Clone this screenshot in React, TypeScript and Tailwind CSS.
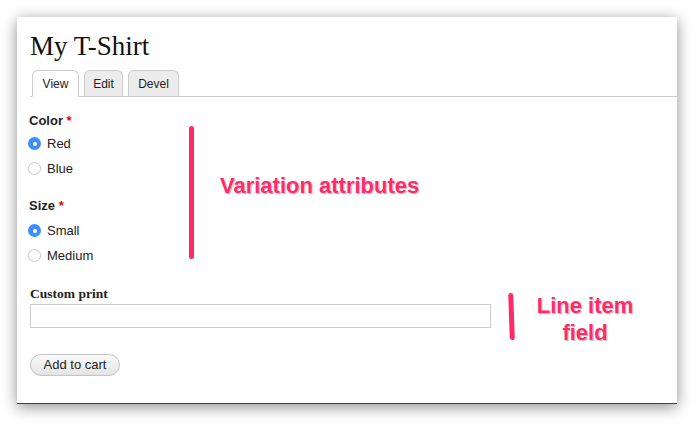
import React from 'react';

const sans = { fontFamily: '"Liberation Sans", Arial, sans-serif' };
const serif = { fontFamily: '"Liberation Serif", "Times New Roman", serif' };

const Radio: React.FC<{ checked?: boolean; label: string }> = ({ checked, label }) => (
  <div className="flex items-center h-[25px] -ml-px">
    {checked ? (
      <span className="w-[13px] h-[13px] rounded-full bg-[#3b8ff7] flex items-center justify-center">
        <span className="w-[4px] h-[4px] rounded-full bg-white" />
      </span>
    ) : (
      <span className="w-[13px] h-[13px] rounded-full border border-[#c8c8c8] bg-white" />
    )}
    <span className="ml-[6px] text-[13px] text-[#222]">{label}</span>
  </div>
);

const Note: React.FC<{ children: React.ReactNode }> = ({ children }) => (
  <span
    className="font-bold text-[#ff2a68] [text-shadow:0_0_2px_#fff,1px_1px_1px_rgba(0,0,0,0.35)]"
    style={{ fontFamily: '"Liberation Sans", Arial, sans-serif' }}
  >
    {children}
  </span>
);

export default function App() {
  return (
    <div className="w-[696px] h-[425px] bg-white pt-[17px] pl-[17px]" style={sans}>
      <div className="relative w-[660px] h-[387px] bg-white border-b border-[#444] shadow-[0_3px_14px_rgba(0,0,0,0.45)]">
        <h1 className="pl-[13px] pt-[12px] text-[27px] leading-[34px] text-[#111]" style={serif}>
          My T-Shirt
        </h1>
        <div className="mt-[7px] ml-[13px] flex items-end gap-[5px] border-b border-[#ccc] h-[27px] pl-[2px]">
          <div className="h-[27px] w-[47px] -mb-px bg-white border border-[#ccc] border-b-white rounded-t-[6px] flex items-center justify-center text-[12px] text-[#222]">
            View
          </div>
          <div className="h-[26px] w-[39px] bg-[#ececec] border border-[#ccc] border-b-0 rounded-t-[6px] flex items-center justify-center text-[12px] text-[#222]">
            Edit
          </div>
          <div className="h-[26px] w-[51px] bg-[#ececec] border border-[#ccc] border-b-0 rounded-t-[6px] flex items-center justify-center text-[12px] text-[#222]">
            Devel
          </div>
        </div>

        <div className="pl-[12px] pt-[14px] flex">
          <div className="w-[160px]">
            <div className="text-[13px] font-bold text-[#222] h-[20px]">
              Color <span className="text-[#e00]">*</span>
            </div>
            <Radio checked label="Red" />
            <Radio label="Blue" />
            <div className="mt-[15px] text-[13px] font-bold text-[#222] h-[22px]">
              Size <span className="text-[#e00]">*</span>
            </div>
            <Radio checked label="Small" />
            <Radio label="Medium" />
          </div>
          <div className="mt-[15px] w-[5px] h-[133px] rounded-full bg-[#ff2a68]" />
          <div className="ml-[26px] mt-[61px] text-[22px] leading-[28px]">
            <Note>Variation attributes</Note>
          </div>
        </div>

        <div className="pl-[13px] mt-[17px] flex">
          <div>
            <div className="text-[13.5px] font-bold text-[#222] leading-[18px]" style={serif}>
              Custom print
            </div>
            <div className="mt-[1px] w-[461px] h-[24px] border border-[#ccc] bg-white" />
            <button className="mt-[26px] h-[22px] w-[90px] rounded-full border border-[#c4c4c4] bg-gradient-to-b from-[#fafafa] to-[#e4e4e4] text-[13px] text-[#222]">
              Add to cart
            </button>
          </div>
          <div className="ml-[18px] mt-[8px] w-[5px] h-[47px] rounded-full bg-[#ff2a68] rotate-[-2deg]" />
          <div className="ml-[21px] mt-[7px] w-[100px] text-center text-[22px] leading-[27px]">
            <Note>Line item</Note>
            <br />
            <Note>field</Note>
          </div>
        </div>
      </div>
    </div>
  );
}
